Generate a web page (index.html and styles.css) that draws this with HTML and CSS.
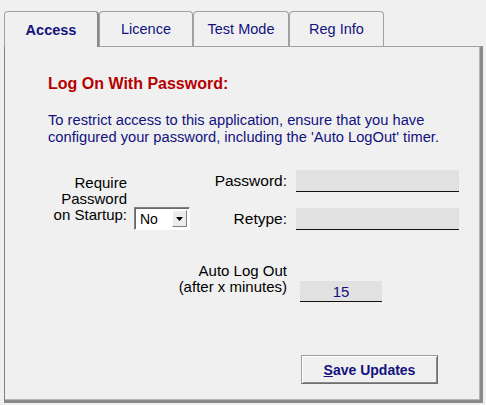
FILE: index.html
```html
<!DOCTYPE html>
<html lang="en">
  <head>
    <meta charset="UTF-8" />
    <title>Access Settings</title>
    <link rel="stylesheet" href="styles.css">
  </head>
  <body>
    <div class="tabs">
      <div class="tab tab-access active">Access</div>
      <div class="tab tab-licence">Licence</div>
      <div class="tab tab-test">Test Mode</div>
      <div class="tab tab-reg">Reg Info</div>
    </div>

    <div class="panel">
      <h2 class="title">Log On With Password:</h2>
      <p class="intro">
        To restrict access to this application, ensure that you have<br>
        configured your password, including the 'Auto LogOut' timer.
      </p>

      <div class="login">
        <div class="startup">
          <label class="startup-label">Require<br>Password<br>on Startup:</label>
          <div class="combo">
            <span class="combo-value">No</span>
            <span class="combo-btn">
              <svg width="7" height="4" viewBox="0 0 7 4"><path d="M0 0h7L3.5 4z" fill="#000"/></svg>
            </span>
          </div>
        </div>
        <div class="fields">
          <div class="field-row">
            <label class="field-label">Password:</label>
            <div class="field"></div>
          </div>
          <div class="field-row">
            <label class="field-label">Retype:</label>
            <div class="field"></div>
          </div>
        </div>
      </div>

      <div class="timeout">
        <label class="timeout-label">Auto Log Out<br>(after x minutes)</label>
        <div class="field field-small">15</div>
      </div>

      <div class="actions">
        <button class="save"><u>S</u>ave Updates</button>
      </div>
    </div>
  </body>
</html>
```

FILE: styles.css
```css
body {
  margin: 0;
  background: #f0f0f0;
  font-family: "Liberation Sans", Arial, sans-serif;
  font-size: 14px;
  color: #000;
}
.tabs {
  display: flex;
  padding: 11px 0 0 4px;
}
.tab {
  box-sizing: border-box;
  height: 35px;
  display: flex;
  align-items: center;
  justify-content: center;
  font-size: 14.5px;
  color: #12127f;
  border: 1px solid #a0a0a0;
  border-bottom: none;
  border-radius: 4px 4px 0 0;
  background: #f0f0f0;
}
.tab-access { width: 95px; }
.tab-licence { width: 94px; }
.tab-test { width: 96px; }
.tab-reg { width: 95px; }
.tab.active {
  font-weight: bold;
  height: 36px;
  margin-bottom: -1px;
  position: relative;
  border-right: 2px solid #8a8a8a;
}
.panel {
  box-sizing: border-box;
  width: 479px;
  height: 357px;
  margin-left: 4px;
  padding: 28px 0 0 43px;
  border-top: 1px solid #a0a0a0;
  border-left: 1px solid #808080;
  border-right: 3px solid #8a8a8a;
  border-bottom: 3px solid #8a8a8a;
  box-shadow: inset -1px -1px #b4b4b4;
}
.title {
  margin: 0;
  font-size: 16px;
  line-height: 18px;
  font-weight: bold;
  color: #b50000;
}
.intro {
  margin: 19px 0 0;
  font-size: 14.7px;
  line-height: 17px;
  color: #12127f;
}
.login {
  display: flex;
  margin-top: 24px;
}
.startup {
  display: flex;
  align-items: flex-end;
}
.startup-label {
  width: 79px;
  text-align: right;
  font-size: 15px;
  line-height: 16px;
  margin-bottom: 7px;
}
.combo {
  box-sizing: border-box;
  width: 56px;
  height: 23px;
  margin-left: 7px;
  display: flex;
  align-items: center;
  background: #fff;
  border: 1px solid;
  border-color: #808080 #fff #fff #808080;
  box-shadow: inset 1px 1px #696969;
}
.combo-value {
  flex: 1;
  padding-left: 5px;
}
.combo-btn {
  box-sizing: border-box;
  width: 15px;
  height: 17px;
  margin-right: 2px;
  display: flex;
  align-items: center;
  justify-content: center;
  background: #ececec;
  border: 1px solid;
  border-color: #fff #808080 #808080 #fff;
}
.fields {
  display: flex;
  flex-direction: column;
  gap: 16px;
}
.field-row {
  display: flex;
  align-items: center;
}
.field-label {
  width: 97px;
  text-align: right;
  font-size: 15.5px;
}
.field {
  box-sizing: border-box;
  width: 163px;
  height: 22px;
  margin-left: 9px;
  background: #e1e1e1;
  border-bottom: 1px solid #111;
}
.timeout {
  display: flex;
  align-items: flex-end;
  margin-top: 33px;
}
.timeout-label {
  width: 239px;
  text-align: right;
  font-size: 15px;
  line-height: 16px;
  margin-bottom: 7px;
}
.field-small {
  width: 82px;
  height: 21px;
  margin-left: 13px;
  display: flex;
  align-items: center;
  justify-content: center;
  color: #12127f;
  font-size: 15px;
}
.actions {
  display: flex;
  margin-top: 53px;
  padding-left: 253px;
}
.save {
  box-sizing: border-box;
  width: 137px;
  height: 29px;
  background: #f0f0f0;
  font-family: inherit;
  font-size: 14px;
  font-weight: bold;
  color: #12127f;
  border: 1px solid;
  border-color: #a0a0a0 #6e6e6e #6e6e6e #a0a0a0;
  box-shadow: inset 1px 1px #fff, inset -1px -1px #8a8a8a;
  padding: 0;
}
```
